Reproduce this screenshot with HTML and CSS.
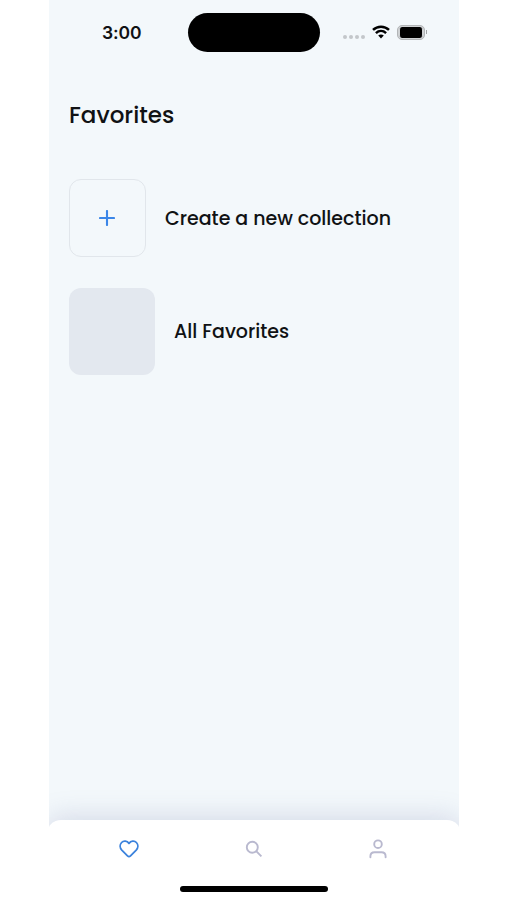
FILE: index.html
```html
<!DOCTYPE html>
<html lang="en">
<head>
  <meta charset="UTF-8">
  <title>Favorites</title>
  <link rel="stylesheet" href="styles.css">
</head>
<body>

  <div class="phone">
    <header class="status-bar">
      <span class="time">3:00</span>
      <div class="island"></div>
      <div class="status-icons">
        <div class="dots"><i></i><i></i><i></i><i></i></div>
        <svg class="wifi" width="18" height="14" viewBox="0 0 18 14" fill="none" stroke="#000" stroke-width="2.5">
          <path d="M1 4.9C5.5.6 12.5.6 17 4.9"/>
          <path d="M3.9 8.1c3-2.7 7.2-2.7 10.2 0"/>
          <path d="M9 13.4L6.2 10.6c1.6-1.4 4-1.4 5.6 0z" fill="#000" stroke="none"/>
        </svg>
        <div class="battery"><div class="level"></div></div>
        <div class="battery-tip"></div>
      </div>
    </header>

    <main>
      <h1>Favorites</h1>

      <div class="collection">
        <div class="thumb add">
          <svg width="16" height="16" viewBox="0 0 16 16" stroke="#3b86e8" stroke-width="2.1" stroke-linecap="round">
            <path d="M8 1v14M1 8h14"/>
          </svg>
        </div>
        <span class="label create">Create a new collection</span>
      </div>

      <div class="collection">
        <div class="thumb all"></div>
        <span class="label">All Favorites</span>
      </div>
    </main>
  </div>

  <footer class="tab-bar">
    <nav>
      <svg width="20" height="18" viewBox="0 0 20 18" fill="none" stroke="#3b82dc" stroke-width="1.8" stroke-linejoin="round">
        <path d="M10 3.4C8.1.8 4.6.4 2.6 2.5.5 4.7.9 8 2.8 10.1L8.5 15.8c.9.8 2.1.8 3 0l5.7-5.7c1.9-2.1 2.3-5.4.2-7.6C15.4.4 11.9.8 10 3.4z"/>
      </svg>
      <svg width="18" height="18" viewBox="0 0 18 18" fill="none" stroke="#b9b9cf" stroke-width="1.9">
        <circle cx="7.3" cy="7.3" r="5.5"/>
        <path d="M11.2 11.2l5.2 5.2"/>
      </svg>
      <svg width="18" height="20" viewBox="0 0 18 20" fill="none" stroke="#b9b9cf" stroke-width="1.9" stroke-linecap="round">
        <circle cx="9" cy="5.2" r="3.8"/>
        <path d="M1.4 18.2v-.9c0-2.5 1.8-4.1 4.2-4.1h6.8c2.4 0 4.2 1.6 4.2 4.1v.9"/>
      </svg>
    </nav>
    <div class="home-indicator"></div>
  </footer>

</body>
</html>
```

FILE: styles.css
```css
* {
  box-sizing: border-box;
}

body {
  margin: 0;
  height: 900px;
  background: #fff;
  color: #101214;
  font-family: Poppins, Inter, sans-serif;
  display: flex;
  flex-direction: column;
  overflow: hidden;
}

.phone {
  width: 410px;
  height: 830px;
  margin-left: 49px;
  flex-shrink: 0;
  background: #f3f8fb;
}

.status-bar {
  height: 64px;
  padding: 0 32px 0 53px;
  display: flex;
  align-items: center;
}

.time {
  width: 86px;
  font-family: Inter, sans-serif;
  font-size: 17.5px;
  font-weight: 600;
  letter-spacing: -0.1px;
}

.island {
  width: 132px;
  height: 39px;
  border-radius: 20px;
  background: #000;
}

.status-icons {
  margin-left: auto;
  display: flex;
  align-items: center;
}

.dots {
  display: flex;
  gap: 2px;
  margin: 9px 7px 0 0;
}

.dots i {
  width: 4px;
  height: 4px;
  border-radius: 50%;
  background: #c3c7ca;
}

.battery {
  width: 28px;
  height: 15px;
  margin-left: 7px;
  padding: 1px;
  border: 1px solid #b2b5b7;
  border-radius: 5px;
  background: #cfd2d4;
}

.level {
  height: 100%;
  border-radius: 3px;
  border: 0 solid #cfd2d4;
  border-width: 0 1px;
  background: #000;
}

.battery-tip {
  width: 1px;
  height: 4px;
  margin-left: 1px;
  background: #a0a3a5;
}

main {
  padding: 36px 20px 0;
}

h1 {
  margin: 0 0 48px;
  font-size: 23px;
  line-height: 31px;
  font-weight: 500;
}

.collection {
  display: flex;
  align-items: center;
  gap: 19px;
  margin-bottom: 31px;
}

.thumb {
  border-radius: 12px;
  display: flex;
  align-items: center;
  justify-content: center;
}

.add {
  width: 77px;
  height: 78px;
  padding: 0 1px 1px 0;
  border: 1px solid #e1e6eb;
}

.all {
  width: 86px;
  height: 87px;
  background: #e3e8ef;
}

.label {
  font-size: 19px;
  font-weight: 500;
}

.tab-bar {
  width: 414px;
  height: 80px;
  margin: -10px 0 0 47px;
  flex-shrink: 0;
  border-radius: 14px 14px 0 0;
  background: #fff;
  box-shadow: 0 -4px 26px rgba(120, 130, 175, 0.24);
  clip-path: inset(-40px 2px 0 2px);
}

nav {
  height: 57px;
  padding: 0 74px 0 72px;
  display: flex;
  align-items: center;
  justify-content: space-between;
}

.home-indicator {
  width: 148px;
  height: 6px;
  margin: 9px auto 0;
  border-radius: 3px;
  background: #000;
}
```
